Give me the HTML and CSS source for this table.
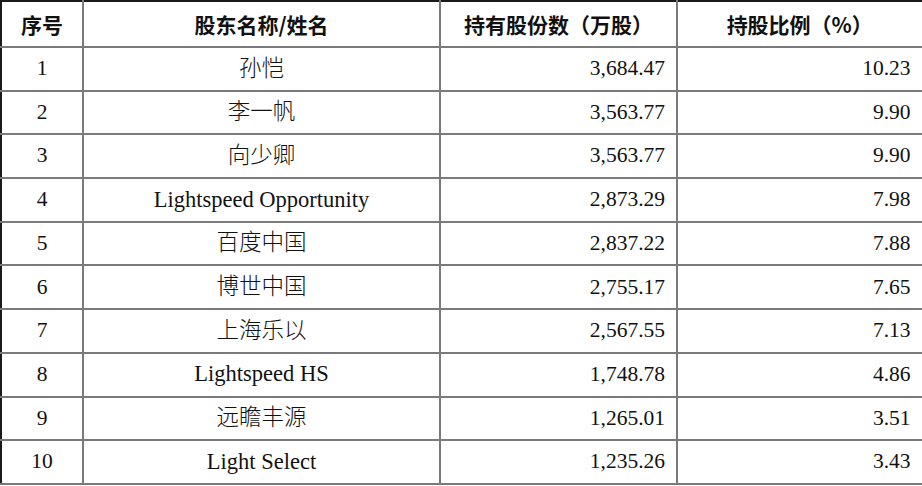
FILE: index.html
```html
<!DOCTYPE html>
<html lang="zh-CN">
<head>
<meta charset="utf-8">
<title>股东</title>
<link rel="stylesheet" href="styles.css">
</head>
<body>
<table class="sh">
  <colgroup>
    <col class="c1"><col class="c2"><col class="c3"><col class="c4">
  </colgroup>
  <thead>
    <tr><th>序号</th><th>股东名称/姓名</th><th>持有股份数（万股）</th><th>持股比例（%）</th></tr>
  </thead>
  <tbody>
    <tr><td class="ctr">1</td><td class="name">孙恺</td><td class="num">3,684.47</td><td class="num">10.23</td></tr>
    <tr><td class="ctr">2</td><td class="name">李一帆</td><td class="num">3,563.77</td><td class="num">9.90</td></tr>
    <tr><td class="ctr">3</td><td class="name">向少卿</td><td class="num">3,563.77</td><td class="num">9.90</td></tr>
    <tr><td class="ctr">4</td><td class="name">Lightspeed Opportunity</td><td class="num">2,873.29</td><td class="num">7.98</td></tr>
    <tr><td class="ctr">5</td><td class="name">百度中国</td><td class="num">2,837.22</td><td class="num">7.88</td></tr>
    <tr><td class="ctr">6</td><td class="name">博世中国</td><td class="num">2,755.17</td><td class="num">7.65</td></tr>
    <tr><td class="ctr">7</td><td class="name">上海乐以</td><td class="num">2,567.55</td><td class="num">7.13</td></tr>
    <tr><td class="ctr">8</td><td class="name">Lightspeed HS</td><td class="num">1,748.78</td><td class="num">4.86</td></tr>
    <tr><td class="ctr">9</td><td class="name">远瞻丰源</td><td class="num">1,265.01</td><td class="num">3.51</td></tr>
    <tr><td class="ctr">10</td><td class="name">Light Select</td><td class="num">1,235.26</td><td class="num">3.43</td></tr>
  </tbody>
</table>
</body>
</html>
```
FILE: styles.css
```css
html, body {
  margin: 0;
  padding: 0;
  background: #ffffff;
}
.sh {
  width: 922px;
  border-collapse: collapse;
  table-layout: fixed;
  font-family: "Liberation Serif", "Noto Sans CJK SC", serif;
  color: #111;
  border-top: 2px solid #1a1a1a;
  border-left: 2px solid #1a1a1a;
  border-right: 3px solid #1a1a1a;
}
.c1 { width: 82px; }
.c2 { width: 357px; }
.c3 { width: 237px; }
.c4 { width: 246px; }
.sh th, .sh td {
  border: 2px solid #7a7a7a;
  padding: 0;
}
.sh tr > *:first-child { border-left: 2px solid #1a1a1a; }
.sh tr > *:last-child { border-right: 3px solid #1a1a1a; }
.sh thead th {
  border-top: 2px solid #1a1a1a;
  height: 44px;
  font-family: "Noto Sans CJK SC", sans-serif;
  font-weight: 700;
  font-size: 21px;
  text-align: center;
  vertical-align: middle;
  line-height: 1;
}
.sh tbody td {
  height: 41.7px;
  font-size: 21.5px;
  vertical-align: middle;
  line-height: 1;
}
.ctr { text-align: center; }
.name {
  text-align: center;
  font-size: 22.5px !important;
  font-weight: 300;
}
.num { text-align: right; padding-right: 11px !important; }
```
